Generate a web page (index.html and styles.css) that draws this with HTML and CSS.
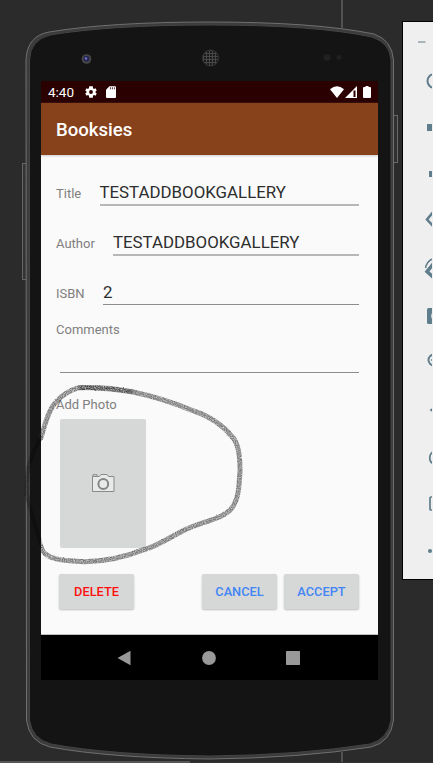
FILE: index.html
```html
<!DOCTYPE html>
<html lang="en">
<head>
<meta charset="utf-8">
<title>Booksies</title>
<link rel="stylesheet" href="styles.css">
</head>
<body>
<main class="desktop">
  <svg class="device" viewBox="0 0 433 763" aria-hidden="true">
    <defs>
      <pattern id="mesh" width="3" height="3" patternUnits="userSpaceOnUse"><rect width="3" height="3" fill="#484848"/><rect width="2" height="2" fill="#1b1b1b"/></pattern>
    </defs>
    <path d="M342 0V28M342 752V763" stroke="#515151" stroke-width="2"/>
    <path d="M0 762H190" stroke="#555" stroke-width="2"/>
    <path d="M190 762.5H433" stroke="#343434"/>
    <rect x="22.5" y="163.5" width="4" height="116" fill="#333" stroke="#666"/>
    <rect x="393.5" y="115.5" width="4" height="47" fill="#303030" stroke="#686868"/>
    <path d="M26 60Q27 36 49 32Q110 22 210 22Q315 22 374 34Q392 40 393.500 60V720Q391 742 371 747Q300 758 210 759Q110 758 50 747Q29 742 26.500 720Z" fill="#3c3c3c" stroke="#707070"/>
    <path d="M29.500 60Q30 40 50 35Q110 25 210 25Q315 25 372 37Q390 43 391 60V720Q388 739 370 744Q300 755 210 756Q110 755 51 744Q32 739 29.500 720Z" fill="#141414" stroke="#444"/>
    <circle cx="86.500" cy="59" r="4.800" fill="#484848"/><circle cx="86.500" cy="58.700" r="3" fill="#252552"/><circle cx="86" cy="58.500" r="1.200" fill="#7373c4"/>
    <circle cx="210.500" cy="58" r="8" fill="url(#mesh)" stroke="#333"/>
    <circle cx="327" cy="57.500" r="3.500" fill="#202020"/><circle cx="339" cy="57.500" r="2.500" fill="#202020"/>
  </svg>

  <section class="screen">
    <header class="status">
      <span class="clock">4:40</span>
      <svg class="gear" viewBox="2 2 20 20"><path fill="#fff" fill-rule="evenodd" d="M19.430 13l.070-1-.070-1 2.110-1.650-2-3.460-2.490 1a7 7 0 0 0-1.690-.98L15 2.500H9l-.38 3.410a7 7 0 0 0-1.690.98l-2.490-1-2 3.460L4.550 11a8 8 0 0 0 0 2l-2.110 1.650 2 3.460 2.490-1q.76.600 1.690.98L9 21.500h6l.38-3.410a7 7 0 0 0 1.690-.98l2.490 1 2-3.460zM12 8.800a3.200 3.200 0 1 1 0 6.400 3.200 3.200 0 0 1 0-6.400z"/></svg>
      <svg class="sd" viewBox="0 0 10 12"><path fill="#fff" d="M3.500.3H9q1 0 1 1V11q0 1-1 1H1q-1 0-1-1V3.800z"/><path d="M4.400 1.300v2M6.400 1.300v2M8.400 1.300v2" stroke="#2a0000" stroke-width=".8"/></svg>
      <svg class="wifi" viewBox="0 0 14 12"><path fill="#fff" d="M0 3.200Q7-2.600 14 3.200L7 12z"/></svg>
      <svg class="signal" viewBox="0 0 12 12"><path fill="#fff" d="M0 12L12 0v12z"/><path d="M9.500 4.500v6.500" stroke="#2a0000" stroke-width="2"/></svg>
      <svg class="battery" viewBox="0 0 8 12"><path fill="#fff" d="M2.500 0h3v1H7q1 0 1 1v9q0 1-1 1H1q-1 0-1-1V2q0-1 1-1h1.500z"/></svg>
    </header>
    <h1 class="appbar">Booksies</h1>
    <form class="form">
      <div class="row title"><span class="label">Title</span><span class="field thick">TESTADDBOOKGALLERY</span></div>
      <div class="row author"><span class="label">Author</span><span class="field thick">TESTADDBOOKGALLERY</span></div>
      <div class="row isbn"><span class="label">ISBN</span><span class="field">2</span></div>
      <span class="label comments">Comments</span>
      <div class="blank"></div>
      <span class="label">Add Photo</span>
      <div class="photo">
        <svg viewBox="0 0 24 20"><path d="M1.500 3.500h7l1.500-2h6l1.500 2h5.500v15h-21.500z" fill="#e8e9e9" stroke="#898989"/><path d="M2 4V1.700h4V4" fill="none" stroke="#898989"/><circle cx="12.300" cy="11" r="4.900" fill="#e8e9e9" stroke="#858585" stroke-width="2"/></svg>
      </div>
      <div class="actions">
        <button type="button" class="delete">DELETE</button>
        <button type="button">CANCEL</button>
        <button type="button">ACCEPT</button>
      </div>
    </form>
    <nav class="nav">
      <svg viewBox="0 0 14 16"><path d="M.5 8L13.500.8v14.400z" fill="#999"/></svg>
      <svg viewBox="0 0 14 16"><circle cx="7" cy="8" r="6.900" fill="#999"/></svg>
      <svg viewBox="0 0 14 16"><rect y="1" width="14" height="14" rx=".7" fill="#999"/></svg>
    </nav>
  </section>

  <aside class="tools">
    <svg viewBox="0 0 29 556" fill="none" stroke="#607d8b" stroke-width="2">
      <path d="M15 20H22.500" stroke="#a8b5bb"/>
      <path d="M32 52C22 52 22 66 32 66"/>
      <path d="M24 102h5v7h-5zM26 149h5v6h-5z" fill="#607d8b" stroke="none"/>
      <path d="M32 188L24 197.500L32 206" stroke-width="2.500"/>
      <path d="M22.500 246Q24 238 32 236" stroke-width="1.500"/><path d="M32 240L24 249.500L32 257" stroke-width="3.500"/>
      <rect x="24" y="286" width="10" height="16" rx="1.500" fill="#607d8b" stroke="none"/><circle cx="32" cy="294" r="3.800" fill="#efefef" stroke="none"/>
      <circle cx="31" cy="338" r="5.500"/><path d="M28 338h4" stroke-width="1.500"/>
      <path d="M26.500 388L32 384V392z" fill="#607d8b" stroke="none"/>
      <path d="M32 429C25 431 25 441 32 442" stroke-width="1.700"/>
      <rect x="27" y="475" width="10" height="13" rx="1" stroke-width="1.700"/>
      <circle cx="27" cy="529" r="2" fill="#607d8b" stroke="none"/>
    </svg>
  </aside>

  <svg class="scribble" viewBox="0 0 433 763" aria-hidden="true">
    <defs><filter id="pencil" x="-5%" y="-5%" width="110%" height="110%"><feTurbulence type="fractalNoise" baseFrequency=".9" numOctaves="2" seed="4" result="noise"/><feDisplacementMap in="SourceGraphic" in2="noise" scale="1.800" xChannelSelector="R" yChannelSelector="G" result="rough"/><feColorMatrix in="noise" values="0 0 0 0 0 0 0 0 0 0 0 0 0 0 0 0 0 1.200 0 .15" result="grain"/><feComposite in="rough" in2="grain" operator="in"/><feGaussianBlur stdDeviation=".75"/></filter></defs>
    <g filter="url(#pencil)" transform="translate(0 .7)" fill="none" stroke-linecap="round">
      <path d="M41 437C45 423 49 408 57 400C64 393 72 389 79 387C96 386 114 389 132 391C151 395 174 402 193 410C211 416 225 427 233 437C239 444 240 459 240 470C239 484 239 498 232 507C224 518 202 521 185 529C169 537 158 545 144 549C126 556 104 561 85 561C66 560 44 560 41 546" stroke="#222" stroke-opacity=".62" stroke-width="5"/>
      <path d="M41 437C31 454 25 470 27 493C30 513 39 532 41 546" stroke="#000" stroke-opacity=".35" stroke-width="4"/>
      <path d="M80 387Q108 386 131 391" stroke="#222" stroke-opacity=".55" stroke-width="5"/>
    </g>
  </svg>
</main>
</body>
</html>
```
FILE: styles.css
```css
* { box-sizing: border-box; }
body { margin: 0; background: #2b2b2b; font-family: Roboto, "Noto Sans", sans-serif; overflow: hidden; }
.desktop { position: relative; width: 433px; height: 763px; display: flex; align-items: flex-start; overflow: hidden; }
.device, .scribble { position: absolute; inset: 0; width: 433px; height: 763px; pointer-events: none; }
.screen { position: relative; flex: none; margin: 81px 0 0 41px; width: 337px; height: 599px; background: #fafafa; display: flex; flex-direction: column; overflow: hidden; }
.status { height: 22px; flex: none; background: #2a0000; color: #fff; display: flex; align-items: center; padding: 0 7px; }
.clock { width: 36.5px; font-size: 13.5px; line-height: 22px; }
.gear { width: 12px; height: 12px; margin-right: 9.5px; }
.sd { width: 10px; height: 12px; }
.wifi { width: 14px; height: 12px; margin-left: auto; margin-right: 1px; }
.signal { width: 12px; height: 12px; margin-right: 6px; }
.battery { width: 8px; height: 12px; }
.appbar { height: 52px; flex: none; margin: 0; padding: 2px 15px 0; background: #87411b; color: #fff; font-size: 18.6px; line-height: 51px; font-weight: 500; box-shadow: 0 1px 2px #ccc; }
.form { height: 479px; flex: none; display: flex; flex-direction: column; align-items: flex-start; padding: 17px 19px 0 15px; }
.row { width: 303px; height: 50px; display: flex; align-items: flex-start; }
.label { display: block; color: #808080; font-size: 13px; line-height: 18px; }
.row .label { margin-top: 13px; flex: none; }
.title .label { width: 43.5px; }
.author .label { width: 57px; }
.isbn .label { width: 47px; }
.isbn { height: 49px; }
.field { flex: 1; height: 34px; border-bottom: 1px solid #8d8d8d; color: #2e2e2e; font-size: 16.85px; line-height: 41px; }
.isbn .field { height: 33px; line-height: 40px; }
.thick { border-bottom: 2px solid #b7b7b7; }
.blank { width: 299px; height: 34px; margin: 0 0 23px 4px; border-bottom: 1px solid #8d8d8d; }
.photo { width: 86px; height: 129px; margin: 5px 0 26px 4px; background: #d6d8d7; border-radius: 2px; display: grid; place-items: center; }
.photo svg { width: 24px; height: 20px; margin-bottom: 1px; }
.actions { width: 300px; margin-left: 3px; display: flex; gap: 7px; }
.actions button { width: 75px; height: 35px; border: 0; border-radius: 2px; padding: 0; background: #d6d8d7; color: #4285f4; font: 500 12.8px/35px Roboto, sans-serif; box-shadow: 0 1px 2px #bbb; }
.actions .delete { color: #ff1010; margin-right: auto; }
.nav { height: 46px; flex: none; border-top: 1px solid #bdc0c0; background: #000; display: flex; align-items: center; justify-content: center; gap: 70.5px; padding-right: 2px; }
.nav svg { width: 14px; height: 16px; }
.tools { position: relative; flex: none; margin: 21px 0 0 24px; width: 31px; height: 559px; background: #efefef; border: solid #000; border-width: 1px 0 1px 1px; }
.tools svg { display: block; width: 29px; height: 556px; }
```
